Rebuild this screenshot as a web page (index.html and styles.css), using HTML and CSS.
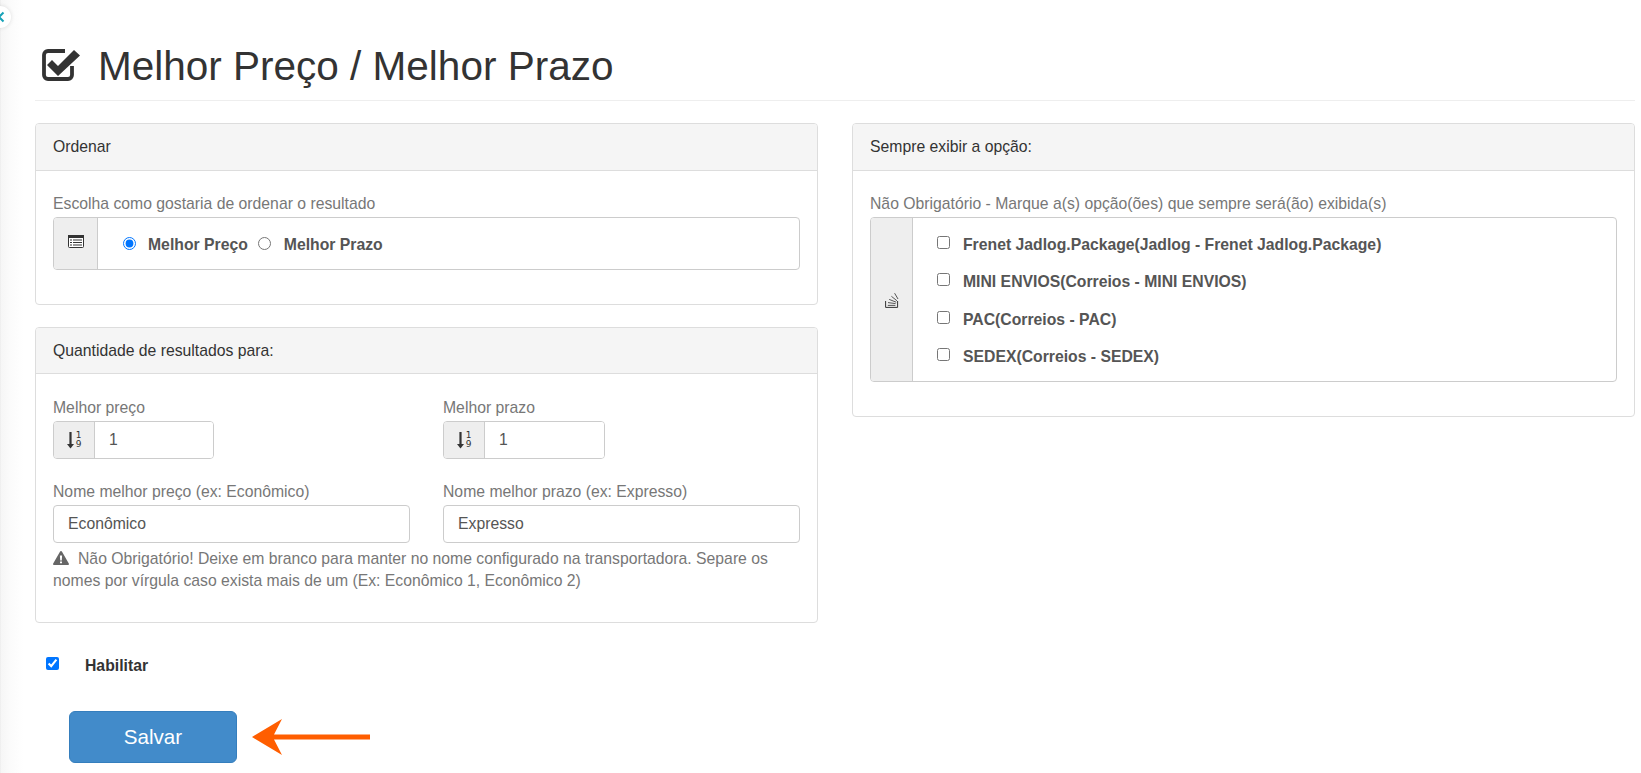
FILE: index.html
```html
<!DOCTYPE html>
<html lang="pt-BR">
<head>
<meta charset="utf-8">
<title>Melhor Preço / Melhor Prazo</title>
<link rel="stylesheet" href="styles.css">
</head>
<body>
<div class="toggle"><svg width="8" height="12" viewBox="0 0 8 12"><path d="M6.500 1.500 2 6l4.500 4.500" fill="none" stroke="#17a2b8" stroke-width="2"/></svg></div>
<main class="page">
  <h1 class="title">
    <svg class="title-icon" width="40" height="34" viewBox="0 0 40 34"><path d="M30 18v9a4 4 0 0 1-4 4H6a4 4 0 0 1-4-4V7a4 4 0 0 1 4-4h17" fill="none" stroke="#333" stroke-width="3.800"/><path d="M5 17l5-5 6 6L32 2l6 5.500L16 28z" fill="#333"/></svg>
    <span>Melhor Preço / Melhor Prazo</span>
  </h1>
  <div class="columns">
    <div class="col">
      <section class="panel panel-order">
        <div class="panel-head">Ordenar</div>
        <div class="panel-body">
          <label class="lbl">Escolha como gostaria de ordenar o resultado</label>
          <div class="group group-radio">
            <div class="addon addon-wide">
              <svg width="16" height="13" viewBox="0 0 16 13"><rect x=".5" y=".5" width="15" height="12" rx="1" fill="#fff" stroke="#333"/><rect x="0" y="0" width="16" height="3" fill="#333"/><path d="M2 5h2M2 7.500h2M2 10h2M5 5h9M5 7.500h9M5 10h9" stroke="#333" stroke-width="1.200"/></svg>
            </div>
            <div class="radio-row">
              <input class="radio" type="radio" name="ord" checked><b class="opt opt-first">Melhor Preço</b>
              <input class="radio radio-2" type="radio" name="ord"><b class="opt">Melhor Prazo</b>
            </div>
          </div>
        </div>
      </section>
      <section class="panel panel-qty">
        <div class="panel-head head-qty">Quantidade de resultados para:</div>
        <div class="panel-body body-qty">
          <div class="grid">
            <div class="field">
              <label class="lbl">Melhor preço</label>
              <div class="group group-num">
                <div class="addon addon-num"><svg width="7" height="17" viewBox="0 0 7 17"><path d="M3.500 0v13" stroke="#333" stroke-width="2.200"/><path d="M0 12h7l-3.500 4.500z" fill="#333"/></svg><span class="digits"><i>1</i><i>9</i></span></div>
                <input class="num-input" value="1">
              </div>
            </div>
            <div class="field">
              <label class="lbl">Melhor prazo</label>
              <div class="group group-num">
                <div class="addon addon-num"><svg width="7" height="17" viewBox="0 0 7 17"><path d="M3.500 0v13" stroke="#333" stroke-width="2.200"/><path d="M0 12h7l-3.500 4.500z" fill="#333"/></svg><span class="digits"><i>1</i><i>9</i></span></div>
                <input class="num-input" value="1">
              </div>
            </div>
            <div class="field">
              <label class="lbl">Nome melhor preço (ex: Econômico)</label>
              <input class="text-input" value="Econômico">
            </div>
            <div class="field">
              <label class="lbl">Nome melhor prazo (ex: Expresso)</label>
              <input class="text-input" value="Expresso">
            </div>
          </div>
          <p class="note"><svg class="warn" width="16" height="14" viewBox="0 0 16 14"><path fill-rule="evenodd" d="M8 0c.4 0 .7.200.9.500l6.900 12c.4.700-.1 1.500-.9 1.500H1.100c-.8 0-1.300-.8-.9-1.500l6.900-12C7.300.200 7.600 0 8 0zM6.900 4.500l.3 5h1.600l.3-5zM7 10.500V12.300h2V10.500z" fill="#666"/></svg>Não Obrigatório! Deixe em branco para manter no nome configurado na transportadora. Separe os nomes por vírgula caso exista mais de um (Ex: Econômico 1, Econômico 2)</p>
        </div>
      </section>
    </div>
    <div class="col">
      <section class="panel panel-always">
        <div class="panel-head">Sempre exibir a opção:</div>
        <div class="panel-body">
          <label class="lbl">Não Obrigatório - Marque a(s) opção(ões) que sempre será(ão) exibida(s)</label>
          <div class="group group-list">
            <div class="addon addon-side addon-center">
              <svg class="stack" width="14" height="16" viewBox="0 0 14 16"><path d="M.6 9v6.400h12V9" fill="none" stroke="#333" stroke-width="1"/><path d="M2.800 13.400h7.600M3 10.600l7.600 1M4.200 7.400l7 2.800M6.400 4.300l5.600 4.500M9.600 1.200l3.400 5.800" stroke="#444" stroke-width=".9" fill="none"/></svg>
            </div>
            <div class="check-list">
              <label class="check-row"><input type="checkbox"><b class="opt">Frenet Jadlog.Package(Jadlog - Frenet Jadlog.Package)</b></label>
              <label class="check-row"><input type="checkbox"><b class="opt">MINI ENVIOS(Correios - MINI ENVIOS)</b></label>
              <label class="check-row"><input type="checkbox"><b class="opt">PAC(Correios - PAC)</b></label>
              <label class="check-row"><input type="checkbox"><b class="opt">SEDEX(Correios - SEDEX)</b></label>
            </div>
          </div>
        </div>
      </section>
    </div>
  </div>
  <label class="enable"><input type="checkbox" checked><b>Habilitar</b></label>
  <div class="actions">
    <button class="save" type="button">Salvar</button>
    <svg class="arrow" width="120" height="38" viewBox="0 0 120 38"><path d="M0 19 30 1 22 16.500H118v5H22L30 37z" fill="#ff5e00"/></svg>
  </div>
</main>
</body>
</html>
```
FILE: styles.css
```css
* { box-sizing: border-box; }
html, body { margin: 0; padding: 0; }
body {
  height: 773px;
  overflow: hidden;
  background: linear-gradient(90deg, #e9e9e9 0, #f6f6f6 1px, #fbfbfb 10px, #fff 24px);
  font-family: "Liberation Sans", Arial, sans-serif;
  font-size: 15.750px;
  color: #333;
}
.toggle {
  position: absolute;
  left: -11px;
  top: 6px;
  width: 22px;
  height: 22px;
  border-radius: 50%;
  background: #fff;
  box-shadow: 0 0 4px rgba(0,0,0,.12);
  display: flex;
  align-items: center;
  justify-content: flex-end;
  padding-right: 6px;
}
.page { padding: 0 6px 0 35px; }
.title {
  margin: 0;
  height: 101px;
  padding: 41px 0 0 7px;
  border-bottom: 1px solid #eee;
  display: flex;
  align-items: flex-start;
  font-weight: 400;
  font-size: 40.500px;
  line-height: 50px;
  color: #333;
}
.title-icon { margin: 7px 16px 0 0; flex: none; }
.columns {
  display: grid;
  grid-template-columns: 783px 783px;
  column-gap: 34px;
  margin-top: 22px;
}
.panel {
  border: 1px solid #ddd;
  border-radius: 4px;
  background: #fff;
  margin-bottom: 22px;
}
.panel-head {
  height: 47px;
  padding: 0 17px;
  line-height: 46px;
  background: #f5f5f5;
  border-bottom: 1px solid #ddd;
  border-radius: 3px 3px 0 0;
  color: #333;
}
.head-qty { height: 46px; line-height: 45px; }
.panel-body { padding: 22px 17px 0; }
.panel-order { height: 182px; }
.panel-qty { height: 296px; margin-bottom: 0; }
.panel-always { height: 294px; }
.body-qty { padding-top: 23px; }
.lbl { display: block; line-height: 21px; height: 24px; color: #777; }
.group {
  display: flex;
  border: 1px solid #ccc;
  border-radius: 4px;
  background: #fff;
  overflow: hidden;
}
.addon {
  background: #eee;
  border-right: 1px solid #ccc;
  display: flex;
  align-items: center;
  justify-content: center;
  flex: none;
}
.addon-wide { width: 44px; }
.addon-side { width: 42px; }
.group-radio { height: 53px; }
.group-radio .addon { align-items: flex-start; padding-top: 17px; }
.radio-row { display: flex; align-items: center; height: 100%; padding: 3px 0 0 25px; }
.radio { width: 13px; height: 13px; margin: 0 6px 4px 0; accent-color: #0075ff; flex: none; }
.radio-2 { margin-left: 10px; margin-right: 13px; }
.opt { color: #555; font-weight: 700; white-space: nowrap; }
.opt-first { margin-left: 6px; }
.grid {
  display: grid;
  grid-template-columns: 357px 357px;
  column-gap: 33px;
  row-gap: 22px;
}
.field { min-width: 0; }
.group-num { width: 162px; height: 38px; }
.field:first-child .group-num { width: 161px; }
.addon-num { width: 41px; gap: 2px; }
.digits { display: flex; flex-direction: column; font-size: 9px; line-height: 9px; font-family: "DejaVu Sans", sans-serif; }
.digits i { font-style: normal; }
.num-input, .text-input {
  border: 0;
  outline: 0;
  font: inherit;
  color: #555;
  background: #fff;
  padding: 0 14px;
}
.num-input { width: 119px; height: 100%; }
.text-input {
  display: block;
  width: 100%;
  height: 38px;
  border: 1px solid #ccc;
  border-radius: 4px;
}
.note { margin: 5px 0 0; line-height: 22px; color: #777; width: 730px; }
.warn { vertical-align: -1px; margin-right: 9px; }
.group-list { height: 165px; }
.addon-center { padding-top: 0; }
.check-list { padding: 8px 0 0 24px; }
.check-row { display: flex; align-items: center; height: 37.500px; }
.check-row input { width: 13px; height: 13px; margin: 0 13px 5px 0; flex: none; }
.enable {
  display: flex;
  align-items: center;
  height: 16px;
  margin: 35px 0 0 11px;
  color: #333;
}
.enable input { width: 13px; height: 13px; margin: 0 26px 6px 0; accent-color: #0075ff; }
.actions { display: flex; align-items: center; gap: 15px; margin: 37px 0 0 34px; }
.save {
  width: 168px;
  height: 52px;
  border: 1px solid #357ebd;
  border-radius: 6px;
  background: #428bca;
  color: #fff;
  font: inherit;
  font-size: 20.600px;
}
.arrow { flex: none; }
```
